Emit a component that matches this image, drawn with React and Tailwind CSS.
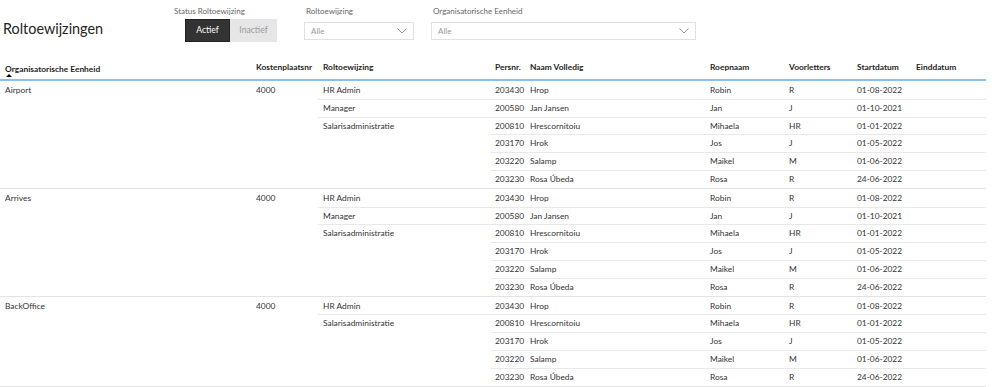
import React from "react";

const groups = [
  {
    org: "Airport",
    kp: "4000",
    roles: [
      { role: "HR Admin", people: [["203430", "Hrop", "Robin", "R", "01-08-2022"]] },
      { role: "Manager", people: [["200580", "Jan Jansen", "Jan", "J", "01-10-2021"]] },
      {
        role: "Salarisadministratie",
        people: [
          ["200810", "Hrescornitoiu", "Mihaela", "HR", "01-01-2022"],
          ["203170", "Hrok", "Jos", "J", "01-05-2022"],
          ["203220", "Salamp", "Maikel", "M", "01-06-2022"],
          ["203230", "Rosa Úbeda", "Rosa", "R", "24-06-2022"],
        ],
      },
    ],
  },
  {
    org: "Arrives",
    kp: "4000",
    roles: [
      { role: "HR Admin", people: [["203430", "Hrop", "Robin", "R", "01-08-2022"]] },
      { role: "Manager", people: [["200580", "Jan Jansen", "Jan", "J", "01-10-2021"]] },
      {
        role: "Salarisadministratie",
        people: [
          ["200810", "Hrescornitoiu", "Mihaela", "HR", "01-01-2022"],
          ["203170", "Hrok", "Jos", "J", "01-05-2022"],
          ["203220", "Salamp", "Maikel", "M", "01-06-2022"],
          ["203230", "Rosa Úbeda", "Rosa", "R", "24-06-2022"],
        ],
      },
    ],
  },
  {
    org: "BackOffice",
    kp: "4000",
    roles: [
      { role: "HR Admin", people: [["203430", "Hrop", "Robin", "R", "01-08-2022"]] },
      {
        role: "Salarisadministratie",
        people: [
          ["200810", "Hrescornitoiu", "Mihaela", "HR", "01-01-2022"],
          ["203170", "Hrok", "Jos", "J", "01-05-2022"],
          ["203220", "Salamp", "Maikel", "M", "01-06-2022"],
          ["203230", "Rosa Úbeda", "Rosa", "R", "24-06-2022"],
        ],
      },
    ],
  },
];

function Chevron() {
  return (
    <svg width="10" height="6" viewBox="0 0 10 6" fill="none">
      <path d="M0.5 0.5 L5 5 L9.5 0.5" stroke="#8a8a8a" strokeWidth="0.9" />
    </svg>
  );
}

function Dropdown({ label, width }) {
  return (
    <div className="flex flex-col">
      <div className="text-[8px] text-[#666] leading-none pl-[2px] h-[22px] pt-[7px]">{label}</div>
      <div
        className={`${width} h-[18px] border border-[#e1e1e1] bg-white flex items-center justify-between pl-[6px] pr-[6px]`}
      >
        <span className="text-[8px] text-[#999] leading-none">Alle</span>
        <Chevron />
      </div>
    </div>
  );
}

const cellBase = "h-full flex items-center shrink-0 overflow-hidden whitespace-nowrap";

function Row({ first, newRole, org, kp, role, p }) {
  const b = (on) => (on ? "border-t border-[#e9e9e9]" : "border-t border-transparent");
  const personBorder = b(!first);
  return (
    <div className="flex h-[17.8px] text-[8.4px] text-[#333]">
      <div className={`${cellBase} w-[251px] pl-[5px] border-t border-transparent`}>{first ? org : ""}</div>
      <div className={`${cellBase} w-[67px] pl-[5px] border-t border-transparent`}>{first ? kp : ""}</div>
      <div className={`${cellBase} w-[173px] pl-[5px] ${b(newRole && !first)}`}>{newRole ? role : ""}</div>
      <div className={`${cellBase} w-[35px] pl-[4px] ${personBorder}`}>{p[0]}</div>
      <div className={`${cellBase} w-[179px] pl-[4px] ${personBorder}`}>{p[1]}</div>
      <div className={`${cellBase} w-[79px] pl-[5px] ${personBorder}`}>{p[2]}</div>
      <div className={`${cellBase} w-[68px] pl-[5px] ${personBorder}`}>{p[3]}</div>
      <div className={`${cellBase} w-[59px] pl-[5px] ${personBorder}`}>{p[4]}</div>
      <div className={`${cellBase} w-[75px] pl-[5px] ${personBorder}`}></div>
    </div>
  );
}

export default function App() {
  return (
    <div
      className="w-[999px] h-[387px] bg-white overflow-hidden"
      style={{ fontFamily: 'Lato, "Open Sans", sans-serif' }}
    >
      {/* Top section */}
      <div className="flex h-[57px] items-start">
        <div className="w-[174px] pl-[3px] pt-[22px] text-[14.4px] leading-none text-[#252423]">
          Roltoewijzingen
        </div>
        <div className="flex flex-col w-[130px]">
          <div className="text-[8px] text-[#666] leading-none h-[19px] pt-[7px]">Status Roltoewijzing</div>
          <div className="flex pl-[11px]">
            <div className="w-[45px] h-[23px] bg-[#333333] text-white text-[8.6px] flex items-center justify-center border border-[#222]">
              Actief
            </div>
            <div className="w-[47px] h-[23px] bg-[#e6e6e6] text-[#9a9a9a] text-[8.6px] flex items-center justify-center">
              Inactief
            </div>
          </div>
        </div>
        <div className="w-[127px]">
          <Dropdown label="Roltoewijzing" width="w-[110px]" />
        </div>
        <Dropdown label="Organisatorische Eenheid" width="w-[265px]" />
      </div>

      {/* Table */}
      <div className="w-[986px]">
        <div className="flex h-[24px] text-[8.4px] font-bold text-[#252423] border-b-2 border-[#8cc0e6]">
          <div className="w-[251px] pl-[5px] pt-[6px] relative">
            <span className="leading-none">Organisatorische Eenheid</span>
            <div className="absolute left-[6px] top-[17px] w-0 h-0 border-l-[3px] border-r-[3px] border-b-[3px] border-l-transparent border-r-transparent border-b-black"></div>
          </div>
          <div className="w-[67px] pl-[5px] pt-[6px] leading-none">Kostenplaatsnr</div>
          <div className="w-[173px] pl-[5px] pt-[6px] leading-none">Roltoewijzing</div>
          <div className="w-[35px] pl-[4px] pt-[6px] leading-none">Persnr.</div>
          <div className="w-[179px] pl-[4px] pt-[6px] leading-none">Naam Volledig</div>
          <div className="w-[79px] pl-[5px] pt-[6px] leading-none">Roepnaam</div>
          <div className="w-[68px] pl-[5px] pt-[6px] leading-none">Voorletters</div>
          <div className="w-[59px] pl-[5px] pt-[6px] leading-none">Startdatum</div>
          <div className="w-[75px] pl-[5px] pt-[6px] leading-none">Einddatum</div>
        </div>
        {groups.map((g, gi) => {
          let first = true;
          return (
            <div key={gi} className="border-b border-[#e3e3e3]">
              {g.roles.map((r, ri) =>
                r.people.map((p, pi) => {
                  const row = (
                    <Row
                      key={`${ri}-${pi}`}
                      first={first}
                      newRole={pi === 0}
                      org={g.org}
                      kp={g.kp}
                      role={r.role}
                      p={p}
                    />
                  );
                  first = false;
                  return row;
                })
              )}
            </div>
          );
        })}
      </div>
    </div>
  );
}
